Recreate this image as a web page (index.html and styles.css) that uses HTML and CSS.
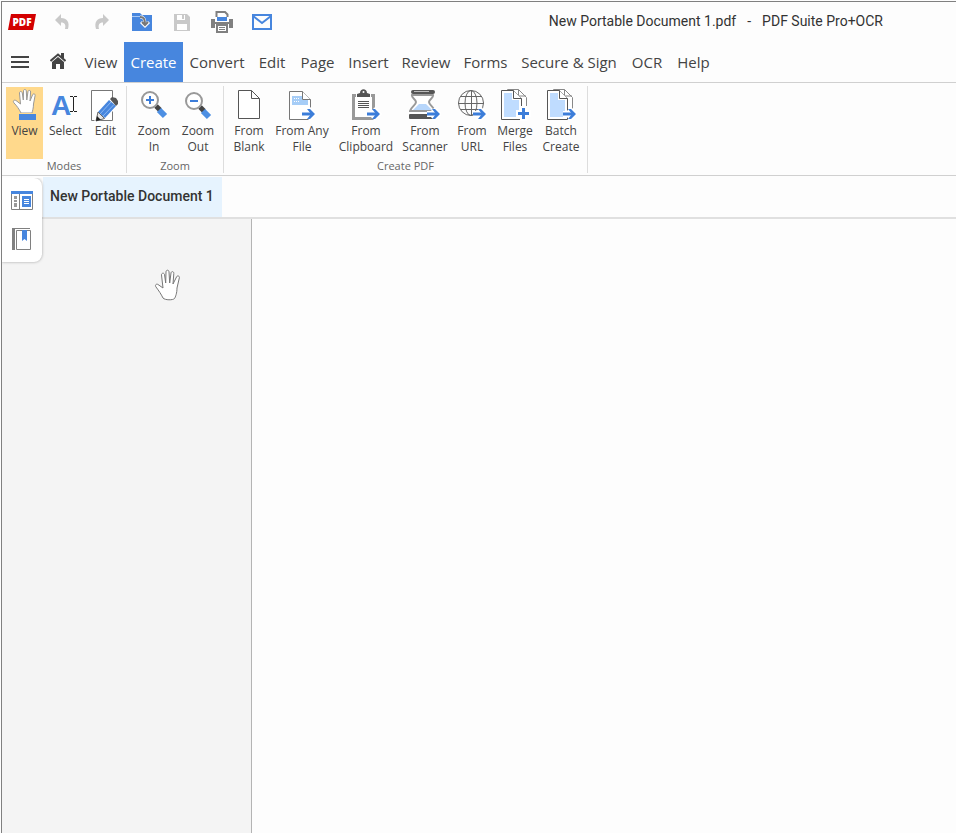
FILE: index.html
```html
<!DOCTYPE html>
<html lang="en">
<head>
    <meta charset="UTF-8">
    <meta name="viewport" content="width=device-width, initial-scale=1.0">
    <title>New Portable Document 1.pdf - PDF Suite Pro+OCR</title>
    <link rel="stylesheet" href="styles.css">
</head>
<body>
    <!-- Shared shapes -->
    <svg class="defs" aria-hidden="true">
        <defs>
            <g id="arrow">
                <path d="M0 0H11M6 -5L11 0L6 5" fill="none" stroke="#fff" stroke-width="6"/>
                <path d="M0 0H10" fill="none" stroke="#3c7dd9" stroke-width="3"/>
                <path d="M5 -5H8L13 0L8 5H5L9 0Z" fill="#3c7dd9"/>
            </g>
            <g id="pages" fill="#fff" stroke="#666">
                <path d="M8.500 5V1.500H19.500L27.500 9.500V28H20" stroke="#888"/>
                <path d="M19.500 1.500V8H27"  fill="none" stroke="#888"/>
                <path d="M2.500 2.500H14.500L22.500 10.500V31.500H2.500Z" stroke="#555"/>
                <path d="M5 5H13V12H20V29H5Z" fill="#bfdcff" stroke="none"/>
                <path d="M14.500 2.500V10.500H22.500" stroke="#555"/>
            </g>
        </defs>
    </svg>

    <div class="window">
        <!-- Title bar -->
        <header class="title-bar">
            <div class="quick-access">
                <button type="button" aria-label="PDF Suite">
                    <svg width="28" height="16"><path d="M3 0H28L25 16H0Z" fill="#d30000"/><text x="14" y="12" class="logo-text">PDF</text></svg>
                </button>
                <button type="button" aria-label="Undo">
                    <svg width="16" height="16"><path d="M1 6L7 0V4C13 4 16 8 14 15H11C12 11 11 8.500 7 8.500V12Z" fill="#c9c9c9"/></svg>
                </button>
                <button type="button" aria-label="Redo">
                    <svg width="16" height="16"><path d="M15 6L9 0V4C3 4 0 8 2 15H5C4 11 5 8.500 9 8.500V12Z" fill="#c9c9c9"/></svg>
                </button>
                <button type="button" aria-label="Open">
                    <svg width="20" height="18">
                        <path d="M0 0H8L10 2H20V18H0Z" fill="#4786de"/>
                        <path d="M0 3.500H9L11 2" fill="none" stroke="#a9c9f3"/>
                        <path d="M8 4C12 4 13 6 13 12M9 9L13 13L17 9" fill="none" stroke="#fff" stroke-width="3"/>
                        <path d="M8 4C12 4 13 6 13 12M10 9L13 12L16 9" fill="none" stroke="#777" stroke-width="2"/>
                    </svg>
                </button>
                <button type="button" aria-label="Save">
                    <svg width="18" height="18"><path d="M1 1H14L17 4V18H1Z" fill="#c9c9c9"/><path d="M4 2H12V7H4ZM4 11H14V17H4Z" fill="#fff"/><path d="M9 2H11V6H9Z" fill="#c9c9c9"/></svg>
                </button>
                <button type="button" aria-label="Print">
                    <svg width="22" height="22">
                        <path d="M5.500 7V1H14L16.500 3.500V7" fill="#fff" stroke="#808080" stroke-width="2"/>
                        <path d="M0 8H22V17H0Z" fill="#808080"/>
                        <path d="M4 6H18V11H4Z" fill="#fff"/>
                        <path d="M6 6H16V10H6Z" fill="#4786de"/>
                        <path d="M4 13H18V18H4Z" fill="#fff"/>
                        <path d="M6 14H16V21H6Z" fill="#fff" stroke="#808080" stroke-width="2"/>
                        <path d="M8 16.500H14M8 18.500H14" stroke="#808080"/>
                    </svg>
                </button>
                <button type="button" aria-label="Email">
                    <svg width="20" height="16"><path d="M1 1H19V15H1ZM1 2L10 9L19 2" fill="none" stroke="#4786de" stroke-width="2"/></svg>
                </button>
            </div>
            <div class="title">
                <span>New Portable Document 1.pdf</span>
                <span>-</span>
                <span>PDF Suite Pro+OCR</span>
            </div>
        </header>

        <!-- Main menu -->
        <nav class="menu">
            <button type="button" aria-label="Main menu">
                <svg width="18" height="14"><path d="M0 2H18M0 7H18M0 12H18" stroke="#444" stroke-width="2"/></svg>
            </button>
            <button type="button" aria-label="Home">
                <svg width="16" height="20">
                    <path d="M8 5L14 10V17H10V12H6V17H2V10Z" fill="#444"/>
                    <path d="M.500 9L8 2.500L15.500 9" fill="none" stroke="#444" stroke-width="2"/>
                    <path d="M11 1H14V6H11Z" fill="#444"/>
                </svg>
            </button>
            <a href="#view">View</a>
            <a href="#create" class="active">Create</a>
            <a href="#convert">Convert</a>
            <a href="#edit">Edit</a>
            <a href="#page">Page</a>
            <a href="#insert">Insert</a>
            <a href="#review">Review</a>
            <a href="#forms">Forms</a>
            <a href="#secure">Secure &amp; Sign</a>
            <a href="#ocr">OCR</a>
            <a href="#help">Help</a>
        </nav>

        <!-- Ribbon -->
        <div class="ribbon">
            <section class="group">
                <div class="tools modes">
                    <button type="button" class="selected">
                        <svg width="32" height="34">
                            <path d="M12 25C10 21 8 18 5 15C3.500 13 5 11.500 7 12.500L11.500 16L10.500 5C10.500 3 13 3 13.300 5L14.300 12L14.500 3C14.500 1 17.200 1 17.300 3L17.800 12L19 3.500C19.300 2 21.800 2 21.600 4L21 13L23.500 7C24.300 5 26.800 6 26 8L24.500 16C24.500 20 23.500 23 23 25Z" fill="#fff" stroke="#999"/>
                            <path d="M10 25H27V26H10Z" fill="#ffd98c"/>
                            <path d="M10 26H27V32H10Z" fill="#4786de"/>
                        </svg>
                        <span>View</span>
                    </button>
                    <button type="button">
                        <svg width="32" height="34">
                            <text x="1" y="27" class="select-letter">A</text>
                            <path d="M20 8.500H23M24 8.500H27M23.500 9V23M20 23.500H23M24 23.500H27" fill="none" stroke="#222"/>
                        </svg>
                        <span>Select</span>
                    </button>
                    <button type="button">
                        <svg width="32" height="34">
                            <path d="M1.500 2.500H22.500V32.500H1.500Z" fill="#fff" stroke="#777"/>
                            <path d="M4 34L7 24L21 9L30 16L15 31Z" fill="#fff"/>
                            <path d="M8 24L19 12L26 18L15 30Z" fill="#4786de"/>
                            <path d="M10 26L21 14M12.500 28.500L24 16.500" stroke="#8db8f2"/>
                            <path d="M8 24L14.500 30.500L6 33Z" fill="#e8e8e8" stroke="#666"/>
                            <path d="M7 28L11 32L6 33Z" fill="#222"/>
                            <path d="M20 11L22 9L26 10L28 13L28 16L26 18Z" fill="#555"/>
                        </svg>
                        <span>Edit</span>
                    </button>
                </div>
                <h2>Modes</h2>
            </section>
            <section class="group">
                <div class="tools zoom">
                    <button type="button">
                        <svg width="32" height="34">
                            <path d="M18 18L22 22" stroke="#444" stroke-width="5"/>
                            <path d="M21 22L27 28" stroke="#4d8fe3" stroke-width="6"/>
                            <circle cx="12" cy="12" r="8" fill="#fff" stroke="#999" stroke-width="2"/>
                            <path d="M8 12H16M12 8V16" stroke="#3c7dd9" stroke-width="2"/>
                        </svg>
                        <span>Zoom<br>In</span>
                    </button>
                    <button type="button">
                        <svg width="32" height="34">
                            <path d="M18 19L22 23" stroke="#444" stroke-width="5"/>
                            <path d="M21 23L27 29" stroke="#4d8fe3" stroke-width="6"/>
                            <circle cx="12" cy="13" r="8" fill="#fff" stroke="#999" stroke-width="2"/>
                            <path d="M8 13H16" stroke="#3c7dd9" stroke-width="2"/>
                        </svg>
                        <span>Zoom<br>Out</span>
                    </button>
                </div>
                <h2>Zoom</h2>
            </section>
            <section class="group">
                <div class="tools create">
                    <button type="button">
                        <svg width="32" height="34"><path d="M5.500 2.500H18.500L26.500 10.500V30.500H5.500ZM18.500 2.500V10.500H26.500" fill="#fff" stroke="#555"/></svg>
                        <span>From<br>Blank</span>
                    </button>
                    <button type="button">
                        <svg width="32" height="34">
                            <path d="M3.500 3.500H16.500L24.500 11.500V31.500H3.500Z" fill="#fff" stroke="#777"/>
                            <path d="M6 8H16V12H22V17H6Z" fill="#a6cdf7"/>
                            <path d="M8 10.500H14M8 13.500H14" stroke="#fff" stroke-dasharray="1 1"/>
                            <path d="M16.500 3.500V11.500H24.500" fill="#fff" stroke="#777"/>
                            <use href="#arrow" x="16" y="26"/>
                        </svg>
                        <span>From Any<br>File</span>
                    </button>
                    <button type="button">
                        <svg width="32" height="34">
                            <path d="M3.500 7.500H23.500V30.500H3.500Z" fill="#fff" stroke="#999" stroke-width="3"/>
                            <path d="M6 10V5H10C10 0 17 0 17 5H21V10Z" fill="#fff"/>
                            <path d="M7 9V6L10 5C10 0 17 0 17 5L20 6V9Z" fill="#555"/>
                            <circle cx="13.500" cy="4" r="1" fill="#fff"/>
                            <path d="M8 13.500H19M8 15.500H19M8 17.500H19M8 19.500H19" stroke="#555"/>
                            <use href="#arrow" x="17" y="26"/>
                        </svg>
                        <span>From<br>Clipboard</span>
                    </button>
                    <button type="button">
                        <svg width="32" height="34">
                            <path d="M3 7H24C25 10 20 11 20 14C20 17 25 19 26 23H1C2 19 7 17 7 14C7 11 2 10 3 7Z" fill="#fff" stroke="#999" stroke-width="2"/>
                            <path d="M10 16H17L23 22H4Z" fill="#b7d6fb"/>
                            <rect x="2" y="2" width="24" height="4" rx="2" fill="#555"/>
                            <path d="M5 3.500H20" stroke="#bbb"/>
                            <rect x="0" y="26" width="27" height="5" rx="1" fill="#555"/>
                            <use href="#arrow" x="18" y="26"/>
                        </svg>
                        <span>From<br>Scanner</span>
                    </button>
                    <button type="button">
                        <svg width="32" height="34">
                            <g fill="none" stroke="#666">
                                <circle cx="15" cy="15" r="12.500"/>
                                <ellipse cx="15" cy="15" rx="6" ry="12.500"/>
                                <path d="M15.500 2V28M2 15.500H28M5 8.500H26M5 21.500H26"/>
                            </g>
                            <use href="#arrow" x="17" y="26"/>
                        </svg>
                        <span>From<br>URL</span>
                    </button>
                    <button type="button">
                        <svg width="32" height="34">
                            <use href="#pages"/>
                            <path d="M24.500 18V33M17 25.500H32" stroke="#fff" stroke-width="7"/>
                            <path d="M24.500 20V31M19 25.500H30" stroke="#3c7dd9" stroke-width="3"/>
                        </svg>
                        <span>Merge<br>Files</span>
                    </button>
                    <button type="button">
                        <svg width="32" height="34">
                            <use href="#pages"/>
                            <use href="#arrow" x="18" y="26"/>
                        </svg>
                        <span>Batch<br>Create</span>
                    </button>
                </div>
                <h2>Create PDF</h2>
            </section>
        </div>

        <!-- Document tabs -->
        <div class="tabs">
            <a href="#doc" class="tab">New Portable Document 1</a>
        </div>

        <!-- Workspace -->
        <main class="workspace">
            <aside class="pane">
                <div class="side-buttons">
                    <button type="button" aria-label="Thumbnails">
                        <svg width="22" height="20">
                            <path d="M.500 1H21.500V18.500H.500Z" fill="#fff" stroke="#808080"/>
                            <path d="M0 0H22V3H0ZM11 5H20V16H11Z" fill="#4786de"/>
                            <path d="M8.500 3V18" stroke="#808080"/>
                            <path d="M3 5H6V8H3ZM3 9H6V11H3ZM3 12H6V16H3Z" fill="#999"/>
                            <path d="M13 8.500H18M13 10.500H18M13 12.500H18" stroke="#fff"/>
                        </svg>
                    </button>
                    <button type="button" aria-label="Bookmarks">
                        <svg width="20" height="24">
                            <path d="M0 1H3V23H0ZM0 1H18V2H0Z" fill="#808080"/>
                            <path d="M4.500 3.500H18.500V22.500H4.500Z" fill="#fff" stroke="#808080"/>
                            <path d="M10 3H15V14L12.500 12L10 14Z" fill="#4786de"/>
                        </svg>
                    </button>
                </div>
            </aside>
            <div class="page-area"></div>
            <!-- Hand tool pointer -->
            <svg class="pointer" width="28" height="32">
                <path d="M10 29C8 25 6 22 3 18C1.500 16 3.500 14.500 5 15.500L10 19L8.500 6C8.300 4 11 3.500 11.500 5.500L12.700 14L13 3C13 .600 16 .600 16 3L16.700 14L18 4C18.300 2 21 2.200 20.800 4.500L20 15L23.500 8C24.300 6 27 7 26.300 9L24 19C24 24 22.500 28 21.500 29.500C20 31.300 12 31.300 10 29Z" fill="#fff" stroke="#777"/>
            </svg>
        </main>
    </div>
</body>
</html>
```
FILE: styles.css
```css
* {
    box-sizing: border-box;
}

body {
    margin: 0;
    padding: 1px 0 0 1px;
    background: #fdfdfd;
    color: #444;
    font-family: "Open Sans", "Noto Sans", sans-serif;
}

button {
    margin: 0;
    padding: 0;
    border: 0;
    background: none;
    color: inherit;
    font: inherit;
}

a {
    color: inherit;
    text-decoration: none;
}

svg {
    display: block;
}

.defs {
    position: absolute;
    width: 0;
    height: 0;
}

.window {
    display: flex;
    flex-direction: column;
    min-height: calc(100vh - 1px);
    border-top: 1px solid #808080;
    border-left: 1px solid #808080;
}

/* Title bar */
.title-bar {
    display: flex;
    justify-content: space-between;
    align-items: center;
    height: 40px;
    padding-right: 73px;
}

.quick-access {
    display: grid;
    grid-template-columns: repeat(7, 40px);
}

.quick-access button {
    display: flex;
    justify-content: center;
    align-items: center;
    height: 40px;
}

.logo-text {
    fill: #fff;
    font-family: "Open Sans", sans-serif;
    font-size: 10px;
    font-weight: 800;
    text-anchor: middle;
}

.title {
    display: flex;
    gap: 11px;
    padding-bottom: 2px;
    color: #333;
    font-family: Roboto, sans-serif;
    font-size: 14px;
    white-space: nowrap;
}

/* Main menu */
.menu {
    display: grid;
    grid-template-columns: 36px 39px 48px 58px 68px 42px 49px 53px 62px 57px 110px 46px 47px;
    height: 41px;
    border-bottom: 1px solid #d0d0d0;
    font-size: 15px;
    line-height: 40px;
    text-align: center;
    white-space: nowrap;
}

.menu button {
    display: flex;
    justify-content: center;
    align-items: center;
}

.menu .active {
    margin-left: -1px;
    background: #4786de;
    color: #fff;
}

/* Ribbon */
.ribbon {
    display: flex;
    padding: 3px 0 2px;
    border-bottom: 1px solid #d0d0d0;
    font-size: 12px;
    line-height: 16px;
}

.group {
    padding-top: 1px;
    border-right: 1px solid #ddd;
    text-align: center;
}

.group h2 {
    margin: 0;
    color: #666;
    font-size: 11px;
    font-weight: 400;
    line-height: 14px;
}

.tools {
    display: grid;
    height: 72px;
    white-space: nowrap;
}

.modes {
    grid-template-columns: 37px 39px 35px;
    column-gap: 3px;
    padding: 0 3px 0 4px;
}

.zoom {
    grid-template-columns: 44px 44px;
    padding: 0 3px 0 5px;
}

.create {
    grid-template-columns: 44px 62px 66px 52px 42px 44px 48px;
    padding: 0 2px 0 3px;
}

.tools button {
    display: flex;
    flex-direction: column;
    align-items: center;
    gap: 1px;
    padding-top: 1px;
}

.tools .selected {
    background: #ffd98c;
}

.select-letter {
    fill: #4786de;
    font-family: "Liberation Sans", sans-serif;
    font-size: 28px;
    font-weight: 700;
}

/* Document tabs */
.tabs {
    display: flex;
    height: 43px;
    padding: 1px 0 0 41px;
    border-bottom: 2px solid #e0e0e0;
}

.tab {
    padding: 0 8px 0 7px;
    background: #e6f3fe;
    color: #333;
    font-family: Roboto, sans-serif;
    font-size: 14px;
    font-weight: 500;
    line-height: 38px;
}

/* Workspace */
.workspace {
    position: relative;
    display: flex;
    flex: 1;
}

.pane {
    width: 250px;
    border-right: 1px solid #b4b4b4;
    background: #f4f4f4;
}

.page-area {
    flex: 1;
}

.side-buttons {
    position: absolute;
    top: -41px;
    left: 0;
    display: grid;
    grid-template-rows: 38px 38px;
    width: 40px;
    padding: 4px 0;
    border-radius: 0 8px 8px 0;
    background: #fff;
    box-shadow: 0 0 3px rgba(0, 0, 0, 0.35);
    clip-path: inset(0 -4px -4px 0);
}

.side-buttons button {
    display: flex;
    justify-content: center;
    align-items: center;
}

.pointer {
    position: absolute;
    top: 50px;
    left: 151px;
}
```
